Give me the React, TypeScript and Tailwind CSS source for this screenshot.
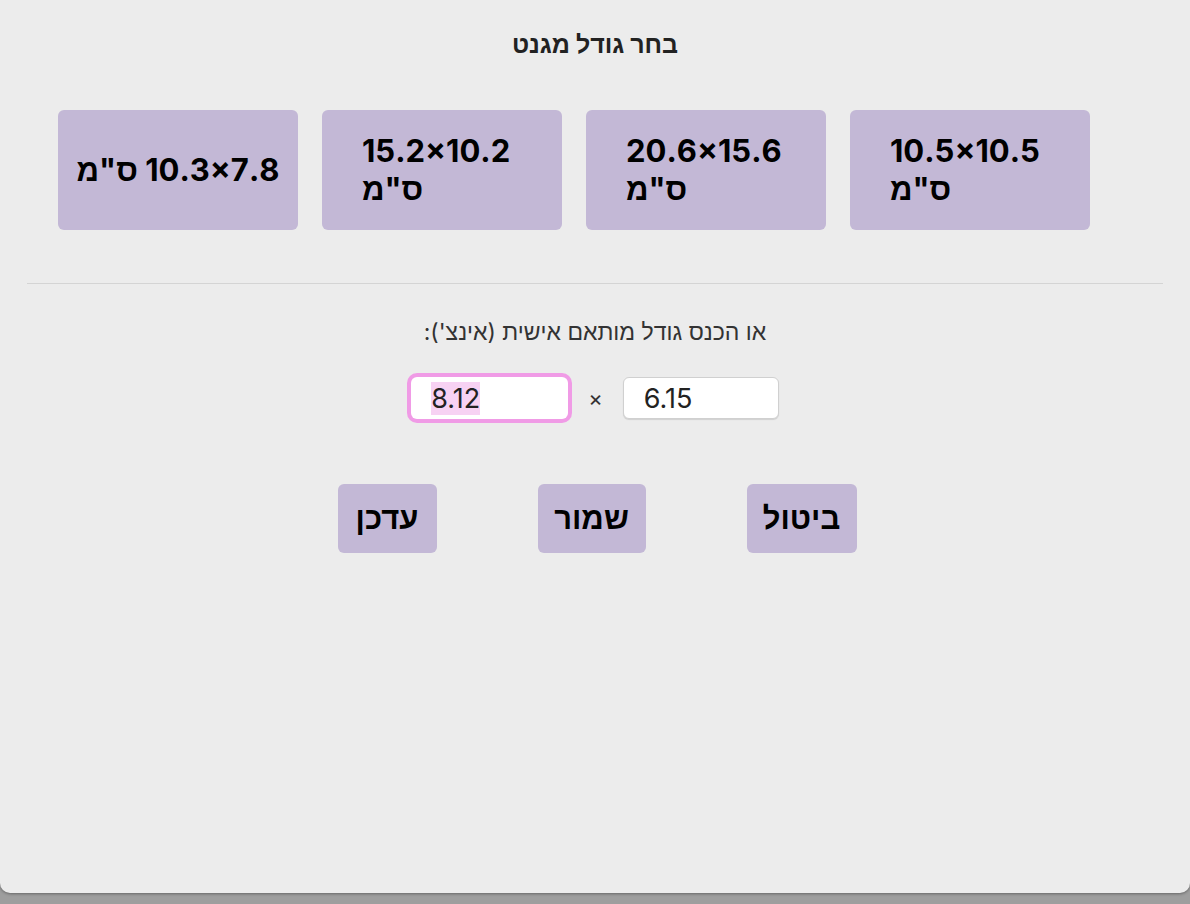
import { useEffect, useRef } from "react";

const sizes = [
  { dims: "10.5×10.5", nowrap: false },
  { dims: "20.6×15.6", nowrap: false },
  { dims: "15.2×10.2", nowrap: false },
  { dims: "10.3×7.8", nowrap: true },
];

const actions = [
  { label: "ביטול", w: "w-[110px]" },
  { label: "שמור", w: "w-[108px]" },
  { label: "עדכן", w: "w-[99px]" },
];

const font = { fontFamily: 'Inter, "Liberation Sans", "DejaVu Sans", sans-serif' };

export default function App() {
  const widthRef = useRef<HTMLInputElement>(null);

  useEffect(() => {
    widthRef.current?.focus();
    widthRef.current?.select();
  }, []);

  return (
    <div className="w-full h-[904px] bg-[#9e9e9e]" style={font}>
      <div
        dir="rtl"
        className="h-[893px] bg-[#ececec] rounded-b-[10px] shadow-[0_1px_3px_rgba(0,0,0,0.35)] flex flex-col text-[#1a1a1a]"
      >
        {/* Title */}
        <h1 className="pt-[30px] text-center text-[25px] font-bold leading-[28px] text-[#222]">בחר גודל מגנט</h1>

        {/* Preset sizes */}
        <div className="mt-[52px] flex justify-start gap-6 pr-[100px]">
          {sizes.map((s, i) => (
            <button
              key={i}
              className={
                "w-[240px] h-[120px] rounded-md bg-[#c3b8d6] flex items-center justify-center " +
                (s.nowrap ? "px-4" : "px-10")
              }
            >
              <span
                className={
                  "text-[31px] font-bold leading-[38px] text-black " +
                  (s.nowrap ? "whitespace-nowrap text-center" : "w-full text-left")
                }
              >
                <span dir="ltr">{s.dims}</span> ס"מ
              </span>
            </button>
          ))}
        </div>

        <div className="mt-[53px] mx-[27px] border-t border-[#d4d4d4]" />

        {/* Custom size */}
        <p className="mt-[35px] text-center text-[23px] leading-[26px] text-[#333]">או הכנס גודל מותאם אישית (אינצ'):</p>

        <div className="mt-[32px] flex justify-center items-center gap-[20px]">
          <input
            defaultValue="6.15"
            dir="ltr"
            className="w-[156px] h-[42px] rounded-md bg-white border border-[#d0d0d0] shadow-[0_1px_1px_rgba(0,0,0,0.12)] px-5 text-[27px] text-[#222] outline-none"
          />
          <span className="text-[22px] text-[#333]">×</span>
          <input
            ref={widthRef}
            defaultValue="8.12"
            dir="ltr"
            className="w-[157px] h-[42px] rounded-md bg-white ring-4 ring-[#f09be6] px-5 text-[27px] text-[#222] outline-none selection:bg-[#f7d2f3] selection:text-[#222]"
          />
        </div>

        {/* Actions */}
        <div className="mt-[65px] pl-[4px] flex justify-center gap-[101px]">
          {actions.map((a) => (
            <button
              key={a.label}
              className={"h-[69px] rounded-md bg-[#c3b8d6] text-[31px] font-bold text-black " + a.w}
            >
              {a.label}
            </button>
          ))}
        </div>
      </div>
    </div>
  );
}
